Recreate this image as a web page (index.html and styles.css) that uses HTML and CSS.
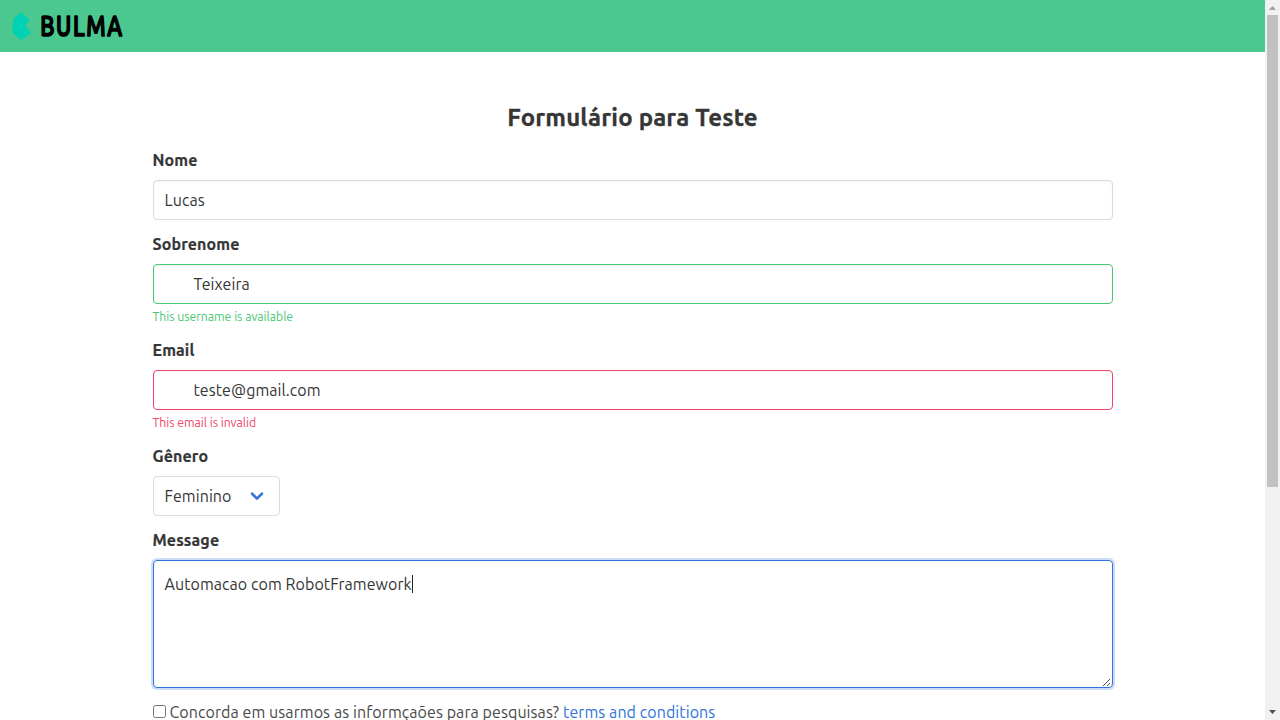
FILE: index.html
```html
<!DOCTYPE html>
<html lang="pt-BR">
<head>
<meta charset="utf-8">
<title>Formulário para Teste</title>
<link rel="stylesheet" href="styles.css">
</head>
<body>
<div class="viewport">
  <div class="page">
    <nav class="navbar">
      <svg class="logo" width="112" height="30" viewBox="11 11 112 30" role="img" aria-label="Bulma">
        <polygon fill="#00d1b2" points="13.7,18.7 20.7,12 29.5,20 25.2,26 31.4,32.7 21,40 12,32"/>
        <text x="40.2" y="35.6" textLength="83.4" lengthAdjust="spacingAndGlyphs" class="logo-text">BULMA</text>
      </svg>
    </nav>
    <main class="container">
      <h1 class="title">Formulário para Teste</h1>
      <div class="field">
        <label class="label">Nome</label>
        <div class="input"><span>Lucas</span></div>
      </div>
      <div class="field">
        <label class="label">Sobrenome</label>
        <div class="input success icon-left"><span>Teixeira</span></div>
        <p class="help green">This username is available</p>
      </div>
      <div class="field">
        <label class="label">Email</label>
        <div class="input danger icon-left"><span>teste@gmail.com</span></div>
        <p class="help red">This email is invalid</p>
      </div>
      <div class="field">
        <label class="label">Gênero</label>
        <div class="input select"><span>Feminino</span>
          <svg class="arrow" width="14" height="10" viewBox="0 0 14 10"><path d="M2 2.6 L7 7.6 L12 2.6" fill="none" stroke="#3273dc" stroke-width="2.6" stroke-linecap="round" stroke-linejoin="round"/></svg>
        </div>
      </div>
      <div class="field">
        <label class="label">Message</label>
        <div class="input textarea"><span>Automacao com RobotFramework</span><i class="caret"></i>
          <svg class="grip" width="9" height="9" viewBox="0 0 9 9"><path d="M1 8 L8 1 M5 8 L8 5" stroke="#555" stroke-width="1" fill="none"/></svg>
        </div>
      </div>
      <label class="checkbox"><span class="box"></span><span>Concorda em usarmos as informçaões para pesquisas?</span><a>terms and conditions</a></label>
    </main>
  </div>
  <div class="scrollbar">
    <svg width="15" height="15" viewBox="0 0 15 15"><path d="M4 10 L7.5 6 L11 10Z" fill="#a0a0a0"/></svg>
    <div class="thumb"></div>
    <svg class="down" width="15" height="15" viewBox="0 0 15 15"><path d="M4 5 L11 5 L7.5 9Z" fill="#505050"/></svg>
  </div>
</div>
</body>
</html>
```
FILE: styles.css
```css
* { box-sizing: border-box; }
body { margin: 0; overflow: hidden; background: #fff; color: #363636; font: 16px/24px Ubuntu, "Noto Sans", sans-serif; letter-spacing: .07px; }
.viewport { display: flex; width: 1280px; height: 720px; overflow: hidden; }
.page { flex: 1; height: 720px; overflow: hidden; }
.navbar { height: 52px; padding: 11px; background: #4bc88f; }
.logo { display: block; overflow: visible; }
.logo-text { font: 500 27.6px/1 Ubuntu, sans-serif; letter-spacing: 2px; fill: #000; stroke: #000; stroke-width: 1.7px; stroke-linejoin: round; }
.container { width: 960px; margin: 0 auto; padding-top: 52px; }
.title { margin: 0 0 17px; font-size: 24px; line-height: 27px; font-weight: 700; text-align: center; letter-spacing: .17px; -webkit-text-stroke: .3px #363636; }
.input span, .checkbox a, .checkbox span { white-space: nowrap; }
.field { margin-bottom: 12px; }
.label { display: block; margin-bottom: 8px; font-weight: 700; letter-spacing: .12px; -webkit-text-stroke: .2px #363636; }
.input { display: flex; align-items: center; height: 40px; padding: 0 11px; border: 1px solid #dbdbdb; border-radius: 4px; box-shadow: inset 0 1px 2px rgba(10,10,10,.05); }
.icon-left { padding-left: 40px; }
.success { border-color: #48c774; }
.danger { border-color: #f14668; }
.help { margin: 4px 0 0; font-size: 12.25px; line-height: 18px; letter-spacing: -.03px; }
.green { color: #48c774; }
.red { color: #f14668; }
.select { width: 127px; justify-content: space-between; padding-right: 15px; box-shadow: none; }
.textarea { position: relative; align-items: flex-start; height: 128px; padding-top: 11px; border-color: #3273dc; box-shadow: 0 0 0 2px rgba(50,115,220,.25); }
.caret { width: 1px; height: 18px; margin-top: 3px; background: #222; }
.grip { position: absolute; right: 1px; bottom: 0; }
.checkbox { display: flex; align-items: center; color: #4a4a4a; letter-spacing: .08px; }
.box { width: 13px; height: 13px; margin: -1px 4px 0 0; border: 1px solid #767676; border-radius: 2.5px; }
.checkbox a { margin-left: 4px; color: #3273dc; }
.scrollbar { display: flex; flex-direction: column; width: 15px; background: #f1f1f1; }
.thumb { width: 11px; height: 472px; margin-left: 2px; background: #c1c1c1; }
.down { margin-top: auto; }
```
